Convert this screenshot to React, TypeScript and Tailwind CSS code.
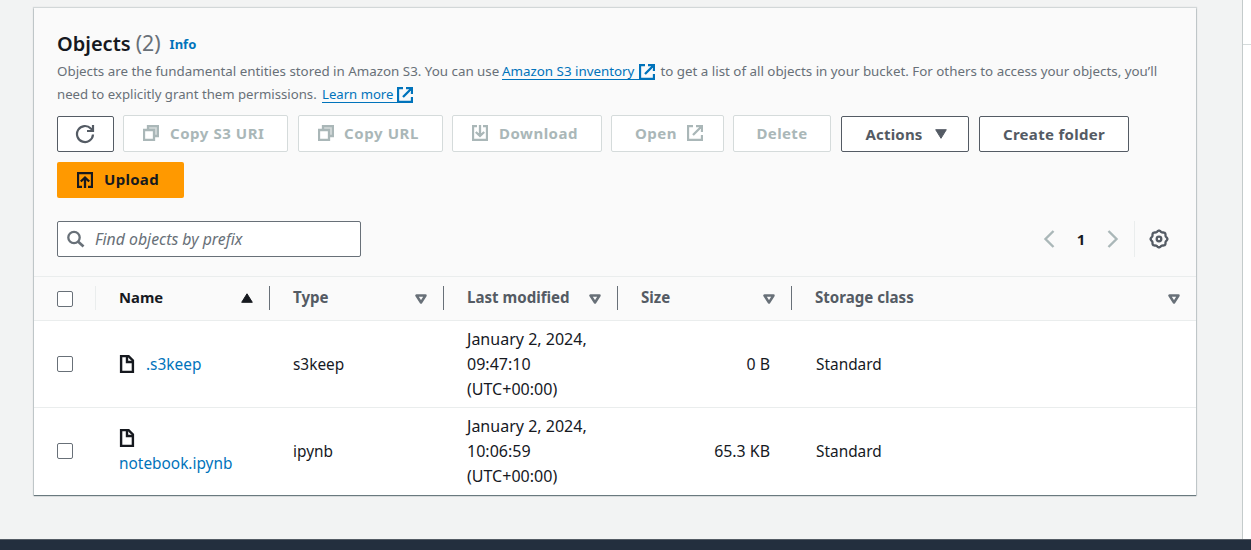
import React from "react";
import type { ReactNode } from "react";

type IconProps = { className?: string };

function Svg({ className = "", children }: IconProps & { children: ReactNode }) {
  return (
    <svg viewBox="0 0 16 16" className={`block h-4 w-4 shrink-0 ${className}`} fill="none" stroke="currentColor" strokeWidth="2.300">
      {children}
    </svg>
  );
}

const External = (p: IconProps) => (
  <Svg {...p}>
    <path d="M6 1H1v14h14v-5M9 1h6v6M14.500 1.500 6 10" />
  </Svg>
);
const Copy = (p: IconProps) => (
  <Svg {...p}>
    <path d="M5 5V1h10v10h-4V5z" fill="#d5dbdb" stroke="none" />
    <path d="M1 5h10v10H1z" />
    <path d="M5 5V1h10v10h-4" />
  </Svg>
);
const DownloadIcon = (p: IconProps) => (
  <Svg {...p}>
    <path d="M5 1H1v14h14V1h-4M8 0v11M3.800 7 8 11l4.200-4" />
  </Svg>
);
const UploadIcon = (p: IconProps) => (
  <Svg {...p}>
    <path d="M5 15H1V1h14v14h-4M8 16V5.500M3.800 9.500 8 5.500l4.200 4" />
  </Svg>
);
const FileIcon = (p: IconProps) => (
  <svg viewBox="0 0 16 18" className={`block h-[18px] w-4 shrink-0 ${p.className ?? ""}`} fill="none" stroke="currentColor" strokeWidth="2.400">
    <path d="M2.100 1.100H9.500L13.900 5.500V16.900H2.100z" />
    <path d="M8 1v6h6" />
  </svg>
);
const Refresh = () => (
  <svg viewBox="0 0 20 20" className="block h-5 w-5" fill="none" stroke="currentColor" strokeWidth="2.200">
    <path d="M18 10.500A8 8 0 1 1 15.800 4.500L18 6.500" />
    <path d="M18 1v6h-6" />
  </svg>
);

const gearOutline = Array.from({ length: 96 }, (_, i) => {
  const angle = (i / 96) * Math.PI * 2;
  const radius = 7.8 + 0.6 * Math.cos(angle * 8);
  return `${(10 + radius * Math.cos(angle)).toFixed(2)},${(10 + radius * Math.sin(angle)).toFixed(2)}`;
}).join(" ");

const Gear = () => (
  <svg viewBox="0 0 20 20" className="block h-5 w-5" fill="none" stroke="currentColor" strokeWidth="2.300" strokeLinejoin="round">
    <polygon points={gearOutline} />
    <circle cx="10" cy="10" r="2.300" />
  </svg>
);

function SortIcon({ active }: { active?: boolean }) {
  return active ? (
    <svg viewBox="0 0 12 10" className="block h-2.5 w-3 text-[#16191f]" fill="currentColor" stroke="currentColor" strokeLinejoin="round">
      <path d="M6 .8 11.300 9.300H.7z" />
    </svg>
  ) : (
    <svg viewBox="0 0 12 10" className="mt-px block h-2.5 w-3" fill="none" stroke="#687078" strokeWidth="2.500" strokeLinejoin="round">
      <path d="M1.500 1.500h9L6 8.500z" />
    </svg>
  );
}

function Button({ className = "", disabled, children }: { className?: string; disabled?: boolean; children: ReactNode }) {
  return (
    <button
      className={`flex shrink-0 items-center rounded-[2px] border bg-white pb-px text-[15px] leading-5 font-bold ${
        disabled ? "h-[37px] border-[#d5dbdb] text-[#aab7b8]" : "h-9 justify-center border-[#545b64] text-[#545b64]"
      } ${className}`}
    >
      {children}
    </button>
  );
}

const Check = ({ className = "" }: IconProps) => (
  <span className={`block h-4 w-4 rounded-[2px] border border-[#687078] bg-white ${className}`} />
);

function Head({ label, active, last }: { label: string; active?: boolean; last?: boolean }) {
  return (
    <div className={`flex h-6 items-center justify-between pl-[23px] pr-4 ${last ? "" : "border-r border-[#687078]"}`}>
      <span className={`mb-0.5 whitespace-nowrap ${active ? "text-[14.800px] text-[#16191f]" : "text-[15.100px] text-[#545b64]"}`}>{label}</span>
      <SortIcon active={active} />
    </div>
  );
}

const GRID = "grid grid-cols-[62px_174px_174px_174px_174px_404px] items-center";

function Row({ name, type, time, size, stacked }: { name: string; type: string; time: string; size: string; stacked?: boolean }) {
  return (
    <div className={`${GRID} h-[87px] border-b border-[#eaeded] text-[15.400px] leading-[25px] text-[#16191f] last:border-b-0`}>
      <div className="pl-[23px]"><Check className={stacked ? "mb-0.5" : ""} /></div>
      <div className={stacked ? "pb-0.5 pl-[23px]" : "flex items-center pl-[23px]"}>
        <div className="flex h-[25px] items-center"><FileIcon /></div>
        <a className={`block text-[#0073bb] ${stacked ? "" : "ml-[11px]"}`}>{name}</a>
      </div>
      <div className="pl-[23px]">{type}</div>
      <div className="pl-[23px] text-[16.050px] leading-[25px]">January 2, 2024,<br />{time}<br />(UTC+00:00)</div>
      <div className="pr-[22px] text-right text-[15.900px]">{size}</div>
      <div className="pl-6">Standard</div>
    </div>
  );
}

function Link({ children, gap }: { children: ReactNode; gap: string }) {
  return (
    <a className="inline-flex items-center text-[#0073bb]">
      <span className={`mb-0.5 h-[18px] border-b border-[#0073bb] leading-[18px] ${gap}`}>{children}</span>
      <External />
    </a>
  );
}

export default function App() {
  return (
    <div className="flex h-[550px] w-[1251px] flex-col overflow-hidden bg-[#f2f3f3] font-['Noto_Sans','Open_Sans',sans-serif]">
      <div className="flex h-[539px]">
        <main className="w-[1242px] pl-[34px] pt-2">
          <section className="h-[487px] w-[1162px] bg-white shadow-[0_1px_1px_0_rgba(0,28,36,0.5),0_0_1px_1px_rgba(0,28,36,0.13)]">
            <header className="h-[269px] border-b border-[#eaeded] bg-[#fafafa] px-[23px] pt-[22px]">
              <div className="flex h-[26px] items-baseline leading-[26px]">
                <h2 className="text-[20px] font-semibold text-[#16191f]">Objects</h2>
                <span className="ml-[5px] text-[21.300px] text-[#687078]">(2)</span>
                <a className="mb-px ml-[9px] self-end text-[13px] leading-[22px] font-bold text-[#0073bb]">Info</a>
              </div>
              <div className="mt-1 whitespace-nowrap text-[13.350px] leading-[23px] text-[#687078]">
                <p className="flex h-[23px] items-center">
                  <span className="w-[445px]">Objects are the fundamental entities stored in Amazon S3. You can use</span>
                  <Link gap="pr-[5px]">Amazon S3 inventory</Link>
                  <span className="ml-[5px]">to get a list of all objects in your bucket. For others to access your objects, you’ll</span>
                </p>
                <p className="flex h-[23px] items-center">
                  <span className="w-[265px] text-[13.200px]">need to explicitly grant them permissions.</span>
                  <Link gap="pr-0.5 text-[13.150px] w-[75px]">Learn more</Link>
                </p>
              </div>
              <div className="mt-[9px] flex h-[37px] items-end">
                <Button className="w-[57px] pr-0.5"><Refresh /></Button>
                <Button disabled className="ml-[9px] w-[165px] gap-[11px] pl-[19px] tracking-[0.550px]"><Copy />Copy S3 URI</Button>
                <Button disabled className="ml-2.5 w-[145px] gap-2.5 pl-[19px] tracking-[0.600px]"><Copy />Copy URL</Button>
                <Button disabled className="ml-[9px] w-[150px] gap-[11px] pl-[19px] tracking-[0.500px]"><DownloadIcon />Download</Button>
                <Button disabled className="ml-[9px] w-[113px] gap-2.5 pl-[23px] tracking-[0.500px]">Open<External /></Button>
                <Button disabled className="ml-[9px] w-[98px] justify-center tracking-[0.350px]">Delete</Button>
                <Button className="ml-2.5 w-32 gap-3 pl-0.5 tracking-[0.200px]">
                  Actions
                  <svg viewBox="0 0 12 10" className="block h-2.5 w-3" fill="currentColor" stroke="currentColor" strokeLinejoin="round">
                    <path d="M.7.7h10.600L6 9.300z" />
                  </svg>
                </Button>
                <Button className="ml-2.5 w-[150px] tracking-[0.300px]">Create folder</Button>
              </div>
              <button className="mt-2.5 flex h-9 w-[127px] items-center gap-[11px] rounded-[2px] bg-[#ff9900] pb-px pl-5 text-[15px] leading-5 font-bold tracking-[0.300px] text-[#16191f]">
                <UploadIcon /><span className="mb-px">Upload</span>
              </button>
              <div className="mt-[23px] flex h-9 items-center justify-between">
                <div className="flex h-9 w-[304px] items-center rounded-[2px] border border-[#687078] bg-white pl-[9px] text-[#687078]">
                  <svg viewBox="0 0 18 18" className="block h-[18px] w-[18px]" fill="none" stroke="currentColor" strokeWidth="2.300">
                    <circle cx="7" cy="7.500" r="5.700" />
                    <path d="m11 11.500 5.500 5" strokeWidth="2.700" />
                  </svg>
                  <span className="ml-2.5 text-[15.800px] italic leading-5">Find objects by prefix</span>
                </div>
                <div className="flex items-center pr-1">
                  <svg viewBox="0 0 12 18" className="block h-[18px] w-3 text-[#aab7b8]" fill="none" stroke="currentColor" strokeWidth="2.400">
                    <path d="M10.500 1 2.500 9l8 8" />
                  </svg>
                  <span className="w-[52px] text-center text-[15px] font-bold leading-5 text-[#16191f]">1</span>
                  <svg viewBox="0 0 12 18" className="block h-[18px] w-3 text-[#aab7b8]" fill="none" stroke="currentColor" strokeWidth="2.400">
                    <path d="m1.500 1 8 8-8 8" />
                  </svg>
                  <span className="ml-[15px] h-9 w-px bg-[#eaeded]" />
                  <span className="pl-[14px] text-[#545b64]"><Gear /></span>
                </div>
              </div>
            </header>
            <div className={`${GRID} h-11 border-b border-[#eaeded] bg-[#fafafa] pb-px font-bold leading-6`}>
              <div className="flex h-6 items-center border-r border-[#eaeded] pl-[23px]"><Check className="mt-px" /></div>
              <Head label="Name" active />
              <Head label="Type" />
              <Head label="Last modified" />
              <Head label="Size" />
              <Head label="Storage class" last />
            </div>
            <Row name=".s3keep" type="s3keep" time="09:47:10" size="0 B" />
            <Row name="notebook.ipynb" type="ipynb" time="10:06:59" size="65.3 KB" stacked />
          </section>
        </main>
        <aside className="w-[9px] border-l border-[#c4cbcb] bg-white">
          <div className="h-[45px] border-b border-[#d5dbdb]" />
        </aside>
      </div>
      <footer className="h-[11px] border-t border-[#545b64] bg-[#232f3e]" />
    </div>
  );
}
